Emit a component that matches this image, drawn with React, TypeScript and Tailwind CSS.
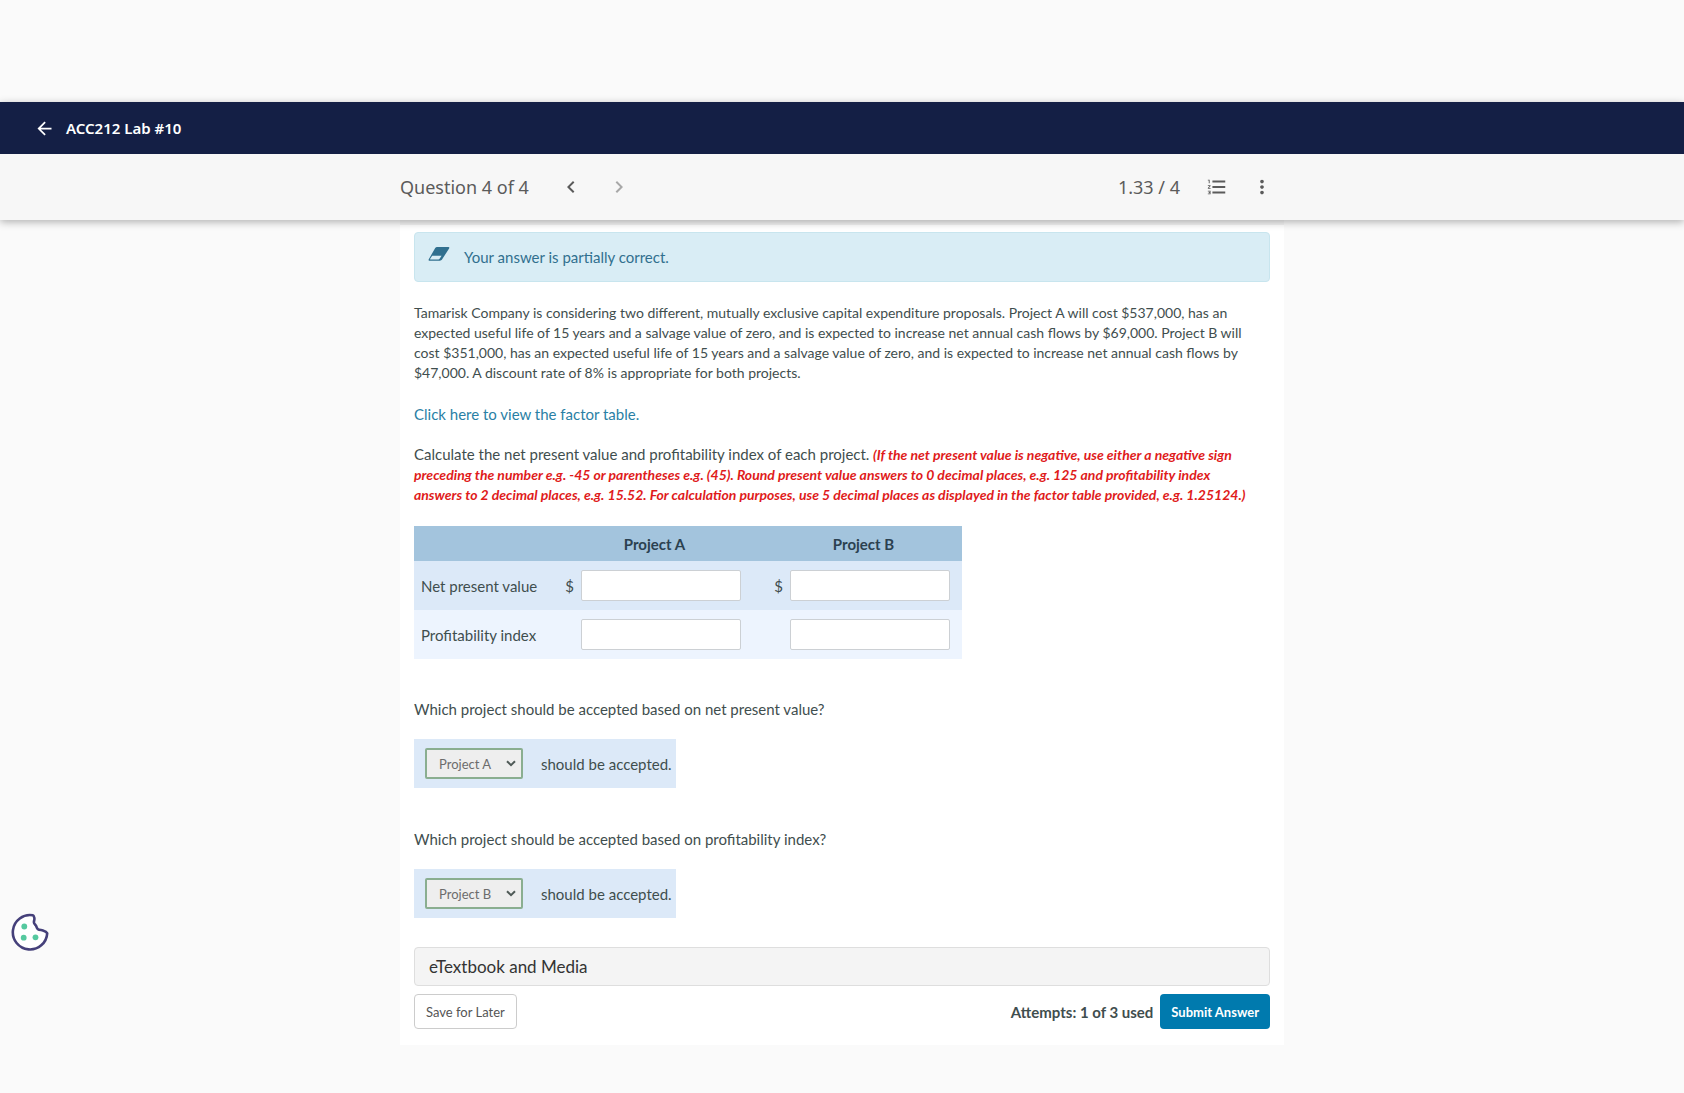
import { useState } from 'react'
import { MdArrowBack, MdChevronLeft, MdChevronRight, MdFormatListNumbered, MdMoreVert } from 'react-icons/md'

const rows = [
  { id: 'npv', label: 'Net present value', prefix: '$', bg: 'bg-[#dce9f8]' },
  { id: 'pi', label: 'Profitability index', prefix: '', bg: 'bg-[#edf4fe]' },
]

const projects = ['Project A', 'Project B']

function Eraser() {
  return (
    <svg width="22" height="16" viewBox="0 0 22 16" className="mb-1.5 shrink-0" aria-hidden="true">
      <path d="M9 1h11.5c.8 0 1.100.7.6 1.400L14 13.600c-.5.7-1.300 1.200-2.100 1.200H1.600c-1 0-1.400-.8-.8-1.600L7.200 2C7.700 1.400 8.300 1 9 1z" fill="#31708f" />
      <path d="M4.200 9.800h9.400l-2 2.900c-.3.5-.7.800-1.200.8H2.600c-.5 0-.7-.4-.4-.8z" fill="#d9edf5" />
    </svg>
  )
}

function Cookie() {
  return (
    <svg width="39" height="39" viewBox="0 0 39 39" aria-hidden="true">
      <path
        d="M22.800 2.300A17.200 17.200 0 1 0 37.200 20.300c-.5-1.200-2.300-2.300-4.300-2.900-1.600-.5-3.600-.2-5-1.200-1.500-1-1.200-2.600-2-3.700-.8-1.200-2-1.700-2-3.300.1-1.800.8-2.800.4-4.400-.3-1.300-.7-2.300-1.500-2.500z"
        fill="#fff"
        stroke="#45407a"
        strokeWidth="2.600"
        strokeLinejoin="round"
      />
      <circle cx="14.300" cy="13.500" r="2.900" fill="#55c99f" />
      <circle cx="13.700" cy="24.700" r="2.900" fill="#55c99f" />
      <circle cx="25.500" cy="24.300" r="2.900" fill="#55c99f" />
    </svg>
  )
}

function Choice({ id, question, initial }: { id: string; question: string; initial: string }) {
  const [value, setValue] = useState(initial)

  return (
    <div className="flex flex-col items-start gap-5">
      <label htmlFor={id}>{question}</label>
      <div className="flex h-[49px] items-center gap-[18px] bg-[#dce9f8] pr-1 pl-[11px]">
        <div className="relative">
          <select
            id={id}
            value={value}
            onChange={(e) => setValue(e.target.value)}
            className="h-[31px] w-[98px] appearance-none rounded-xs border-2 border-[#8aae90] bg-[#eeeeee] pl-3 text-[13px] text-[#6c6c6c]"
          >
            {projects.map((p) => (
              <option key={p}>{p}</option>
            ))}
          </select>
          <svg width="10" height="7" viewBox="0 0 10 7" className="pointer-events-none absolute top-3 right-[7px]" aria-hidden="true">
            <path d="M1 1.200l4 4 4-4" fill="none" stroke="#4f5a57" strokeWidth="2" />
          </svg>
        </div>
        <span>should be accepted.</span>
      </div>
    </div>
  )
}

export default function App() {
  return (
    <div className="min-h-screen bg-[#fafafa] pt-[102px] pb-12 font-['Lato',sans-serif] text-[15px] leading-5 text-[#3f4e4e]">
      <div className="relative font-['Noto_Sans',sans-serif] shadow-[0_2px_8px_rgba(0,0,0,0.3)]">
        <header className="flex h-[52px] items-center gap-[11px] bg-[#141f45] pl-[34px] text-white">
          <button type="button" aria-label="Back">
            <MdArrowBack size={21} />
          </button>
          <h1 className="text-[15px] font-semibold">ACC212 Lab #10</h1>
        </header>

        <div className="h-[66px] bg-[#f7f7f7] text-[#5b5b5b]">
          <nav className="mx-auto flex h-full max-w-[884px] items-center text-[18px]">
            <span>Question 4 of 4</span>
            <button type="button" aria-label="Previous question" className="ml-[30px]">
              <MdChevronLeft size={24} />
            </button>
            <button type="button" aria-label="Next question" className="ml-6 text-[#a8a8a8]">
              <MdChevronRight size={24} />
            </button>
            <span className="ml-auto">1.33 / 4</span>
            <button type="button" aria-label="Question list" className="ml-[26px]">
              <MdFormatListNumbered size={22} />
            </button>
            <button type="button" aria-label="More options" className="mr-[11px] ml-[23px]">
              <MdMoreVert size={22} />
            </button>
          </nav>
        </div>
      </div>

      <main className="mx-auto max-w-[884px] border-t-[5px] border-[#f4f4f4] bg-white px-3.5 pt-[7px] pb-4">
        <div className="flex h-[50px] items-center gap-3.5 rounded border border-[#c8e5ee] bg-[#d9edf5] px-[13px] text-[#31708f]">
          <Eraser />
          <span>Your answer is partially correct.</span>
        </div>

        <p className="mt-[21px] text-[14px]">
          Tamarisk Company is considering two different, mutually exclusive capital expenditure proposals. Project A will cost $537,000, has an{' '}
          <br className="hidden lg:inline" />
          expected useful life of 15 years and a salvage value of zero, and is expected to increase net annual cash flows by $69,000. Project B will{' '}
          <br className="hidden lg:inline" />
          cost $351,000, has an expected useful life of 15 years and a salvage value of zero, and is expected to increase net annual cash flows by{' '}
          <br className="hidden lg:inline" />
          $47,000. A discount rate of 8% is appropriate for both projects.
        </p>
        <p className="mt-[21px]">
          <a href="#factor-table" className="text-[#2a7fa5]">Click here to view the factor table.</a>
        </p>
        <p className="mt-5 text-[14px]">
          <span className="text-[15px]">Calculate the net present value and profitability index of each project.</span>{' '}
          <em className="font-bold text-[#e01b1b]">
            (If the net present value is negative, use either a negative sign <br className="hidden lg:inline" />
            preceding the number e.g. -45 or parentheses e.g. (45). Round present value answers to 0 decimal places, e.g. 125 and profitability index{' '}
            <br className="hidden lg:inline" />
            answers to 2 decimal places, e.g. 15.52. For calculation purposes, use 5 decimal places as displayed in the factor table provided, e.g. 1.25124.)
          </em>
        </p>

        <table className="mt-[21px] border-collapse">
          <thead>
            <tr className="h-[35px] bg-[#a3c4dd] text-[#2b4150]">
              <td className="w-[130px]" />
              {projects.map((p) => (
                <th key={p} scope="col" className="w-[209px] pr-3 pl-6 text-center font-bold">{p}</th>
              ))}
            </tr>
          </thead>
          <tbody>
            {rows.map((row) => (
              <tr key={row.id} className={`h-[49px] ${row.bg}`}>
                <th scope="row" className="pl-[7px] text-left font-normal whitespace-nowrap">{row.label}</th>
                {projects.map((p) => (
                  <td key={p} className="pr-3">
                    <div className="flex items-center justify-end gap-[7px]">
                      <span>{row.prefix}</span>
                      <input
                        type="text"
                        aria-label={`${row.label}, ${p}`}
                        className="h-[31px] w-40 rounded-xs border border-[#ccd0d4] bg-white px-2"
                      />
                    </div>
                  </td>
                ))}
              </tr>
            ))}
          </tbody>
        </table>

        <div className="mt-10 flex flex-col gap-[41px]">
          <Choice id="accept-npv" question="Which project should be accepted based on net present value?" initial="Project A" />
          <Choice id="accept-pi" question="Which project should be accepted based on profitability index?" initial="Project B" />
        </div>

        <button type="button" className="mt-[29px] flex h-[39px] w-full items-center rounded-sm border border-[#dedede] bg-[#f4f4f4] px-3.5 text-[17px] text-[#333]">
          eTextbook and Media
        </button>

        <div className="mt-2 flex items-center">
          <button type="button" className="h-[35px] rounded border border-[#cccccc] bg-white px-[11px] text-[13px] text-[#555]">
            Save for Later
          </button>
          <span className="ml-auto font-bold">Attempts: 1 of 3 used</span>
          <button type="button" className="ml-[7px] h-[35px] rounded bg-[#007aae] px-[11px] text-[13px] font-bold text-white">
            Submit Answer
          </button>
        </div>
      </main>

      <button type="button" aria-label="Cookie preferences" className="fixed bottom-[141px] left-2.5">
        <Cookie />
      </button>
    </div>
  )
}
